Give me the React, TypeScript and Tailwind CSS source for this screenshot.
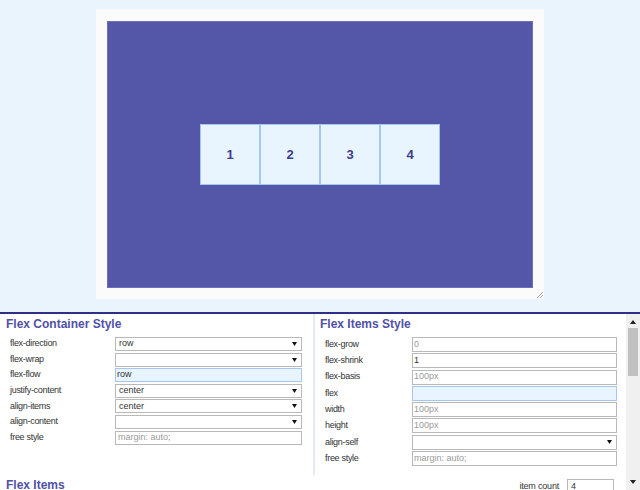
import React from "react";

const ui = "font-['Liberation_Sans',Arial,sans-serif]";

function Arrow({ up = false }: { up?: boolean }) {
  return (
    <svg width="6" height="4" viewBox="0 0 6 4">
      <path d={up ? "M0 4H6L3 0Z" : "M0 0H6L3 4Z"} fill="#222" />
    </svg>
  );
}

function SelectBox({ value = "", w }: { value?: string; w: string }) {
  return (
    <div className={`flex h-full ${w} items-center justify-between border border-[#b9b9b9] bg-white pl-[3px] pr-[4px] text-[9px] text-[#333]`}>
      <span>{value}</span>
      <svg width="5" height="4" viewBox="0 0 5 4">
        <path d="M0 0H5L2.5 4Z" fill="#111" />
      </svg>
    </div>
  );
}

function TextBox({
  value,
  placeholder,
  w,
  active = false,
  pl = "pl-[1px]",
}: {
  value?: string;
  placeholder?: string;
  w: string;
  active?: boolean;
  pl?: string;
}) {
  return (
    <div
      className={`flex h-full ${w} items-center border ${pl} text-[9px] ${
        active ? "border-[#a8c5f0] bg-[#e8f4ff]" : "border-[#b9b9b9] bg-white"
      } ${value ? "text-[#333]" : "text-[#9a9a9a]"}`}
    >
      {value ?? placeholder}
    </div>
  );
}

const containerRows: { label: string; kind: "select" | "input" | "active"; value?: string; placeholder?: string }[] = [
  { label: "flex-direction", kind: "select", value: "row" },
  { label: "flex-wrap", kind: "select" },
  { label: "flex-flow", kind: "active", value: "row" },
  { label: "justify-content", kind: "select", value: "center" },
  { label: "align-items", kind: "select", value: "center" },
  { label: "align-content", kind: "select" },
  { label: "free style", kind: "input", placeholder: "margin: auto;" },
];

const itemRows: { label: string; kind: "select" | "input" | "active"; value?: string; placeholder?: string }[] = [
  { label: "flex-grow", kind: "input", placeholder: "0" },
  { label: "flex-shrink", kind: "input", value: "1" },
  { label: "flex-basis", kind: "input", placeholder: "100px" },
  { label: "flex", kind: "active" },
  { label: "width", kind: "input", placeholder: "100px" },
  { label: "height", kind: "input", placeholder: "100px" },
  { label: "align-self", kind: "select" },
  { label: "free style", kind: "input", placeholder: "margin: auto;" },
];

export default function App() {
  return (
    <div className={`h-[490px] w-[640px] overflow-hidden bg-white ${ui}`}>
      {/* preview */}
      <div className="flex h-[312px] justify-center bg-[#e9f4fd] pt-[9px]">
        <div className="relative h-[290px] w-[448px] bg-[#fbfbfb] pb-[11px] pl-[11px] pr-[11px] pt-[12px]">
          <div className="flex h-full w-full items-center justify-center border border-[#6c6ebf] bg-[#5456a8]">
            {[1, 2, 3, 4].map((n) => (
              <div
                key={n}
                className="flex h-[61px] w-[60px] items-center justify-center border border-[#a8c7ef] bg-[#e9f5fe] text-[13px] font-bold text-[#3d3d8e]"
              >
                {n}
              </div>
            ))}
          </div>
          <svg className="absolute bottom-[1px] right-[1px]" width="6" height="6" viewBox="0 0 6 6">
            <path d="M6 0L0 6M6 3L3 6" stroke="#8a8a8a" strokeWidth="0.8" />
          </svg>
        </div>
      </div>
      <div className="h-[2px] bg-[#2e3085]" />

      {/* controls */}
      <div className="flex h-[176px]">
        <div className="flex w-[626px] flex-col">
          <div className="flex h-[159px]">
            <div className="w-[313px]">
              <div className="h-[23px] pl-[6px] pt-[3px] text-[12px] font-bold leading-[14px] text-[#5051a6]">
                Flex Container Style
              </div>
              <div className="flex flex-col gap-[1.6px] pl-[10px]">
                {containerRows.map((r) => (
                  <div key={r.label} className="flex h-[14px] items-center">
                    <div className="w-[105px] text-[9px] tracking-[-0.3px] text-[#333]">{r.label}</div>
                    {r.kind === "select" ? (
                      <SelectBox value={r.value} w="w-[187px]" />
                    ) : (
                      <TextBox
                        value={r.value}
                        placeholder={r.placeholder}
                        w="w-[187px]"
                        active={r.kind === "active"}
                        pl={r.kind === "active" ? "pl-[1px]" : "pl-[2px]"}
                      />
                    )}
                  </div>
                ))}
              </div>
            </div>
            <div className="h-[161px] w-[2px] bg-[#e2ecf8]" />
            <div className="w-[311px]">
              <div className="h-[23px] pl-[5px] pt-[3px] text-[12px] font-bold leading-[14px] text-[#5051a6]">
                Flex Items Style
              </div>
              <div className="flex flex-col gap-[1.3px] pl-[10px]">
                {itemRows.map((r) => (
                  <div key={r.label} className="flex h-[15px] items-center">
                    <div className="w-[87px] text-[9px] tracking-[-0.3px] text-[#333]">{r.label}</div>
                    {r.kind === "select" ? (
                      <SelectBox value={r.value} w="w-[205px]" />
                    ) : (
                      <TextBox value={r.value} placeholder={r.placeholder} w="w-[205px]" active={r.kind === "active"} />
                    )}
                  </div>
                ))}
              </div>
            </div>
          </div>
          <div className="h-[3px] bg-[#e2ecf8]" />
          <div className="flex flex-1 items-start justify-between pr-[12px]">
            <div className="pl-[6px] pt-[5px] text-[12px] font-bold leading-[14px] text-[#5051a6]">Flex Items</div>
            <div className="flex items-center gap-[8px] pt-[6px]">
              <span className="text-[9px] tracking-[-0.2px] text-[#333]">item count</span>
              <div className="flex h-[15px] w-[47px] items-center border border-[#b9b9b9] pl-[3px] text-[9px] text-[#333]">
                4
              </div>
            </div>
          </div>
        </div>

        {/* scrollbar */}
        <div className="flex w-[14px] flex-col bg-[#f0f0f0]">
          <div className="flex h-[14px] items-center justify-center pt-[2px]">
            <Arrow up />
          </div>
          <div className="mx-[2px] h-[48px] bg-[#c1c1c1]" />
          <div className="flex-1" />
          <div className="flex h-[14px] items-center justify-center pb-[2px]">
            <Arrow />
          </div>
        </div>
      </div>
    </div>
  );
}
